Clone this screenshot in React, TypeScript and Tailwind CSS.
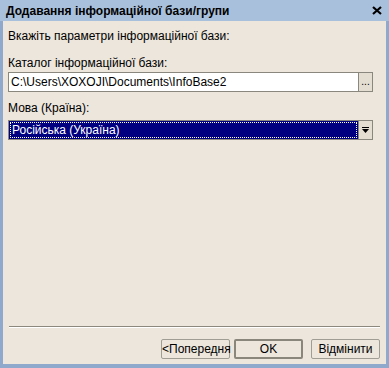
const font = "font-['Tahoma','Liberation_Sans',Arial,sans-serif]"

const CloseGlyph = () => (
    <svg width="10" height="9" viewBox="0 0 10 9">
        <path d="M1 1 L9 8 M9 1 L1 8" stroke="#000" strokeWidth="2.2" />
    </svg>
)

const DropArrow = () => (
    <svg width="9" height="7" viewBox="0 0 9 7">
        <rect x="1" y="0" width="7" height="1" fill="#000" />
        <path d="M1 2 H8 L4.5 6 Z" fill="#000" />
    </svg>
)

const Button = ({ label, primary }: { label: string; primary?: boolean }) => (
    <button
        type="button"
        className={
            primary
                ? "h-[20px] w-[69px] rounded-[2px] border-2 border-[#8a867c] bg-[#ece6dc] text-[12px] leading-none text-black"
                : "h-[20px] w-[69px] rounded-[2px] border border-[#a09d95] bg-[#ece6dc] text-[12px] leading-none text-black"
        }
    >
        {label}
    </button>
)

export default function App() {
    return (
        <div className={`w-[389px] h-[368px] bg-[#8fa9cc] flex flex-col ${font}`}>
            <div className="h-[21px] shrink-0 bg-[#a9c0dd] flex items-center justify-between pl-[6px] pr-[7px]">
                <span className="text-[12px] font-bold text-black leading-none">Додавання інформаційної бази/групи</span>
                <CloseGlyph />
            </div>

            <div className="flex-1 mx-[3px] mb-[4px] bg-[#ece6dc] flex flex-col pl-[5px] pr-[13px] pt-[9px] pb-[5px]">
                <p className="text-[12px] leading-[13px] text-black">Вкажіть параметри інформаційної бази:</p>

                <p className="mt-[14px] text-[12px] leading-[13px] text-black">Каталог інформаційної бази:</p>
                <div className="mt-[2px] h-[20px] flex border border-[#8a877e] bg-white">
                    <div className="flex-1 flex items-center pl-[2px] text-[12px] text-black">C:\Users\XOXOJI\Documents\InfoBase2</div>
                    <div className="w-[14px] border-l border-[#8a877e] bg-[#e3ddd2] flex items-end justify-center pb-[4px] text-[10px] leading-none text-black">...</div>
                </div>

                <p className="mt-[10px] text-[12px] leading-[13px] text-black">Мова (Країна):</p>
                <div className="mt-[5px] h-[20px] flex border border-[#8a877e] bg-[#000080]">
                    <div className="flex-1 m-[1px] border border-dotted border-white flex items-center pl-[1px] text-[12px] text-white">Російська (Україна)</div>
                    <div className="w-[14px] border-l border-[#8a877e] bg-[#e3ddd2] flex items-center justify-center">
                        <DropArrow />
                    </div>
                </div>

                <div className="flex-1" />

                <div className="ml-[1px] mr-[-7px] h-[2px] border-t border-[#8c887e] border-b border-b-white" />

                <div className="mt-[11px] mr-[-7px] flex justify-end">
                    <Button label="<Попередня" />
                    <div className="w-[4px]" />
                    <Button label="OK" primary />
                    <div className="w-[8px]" />
                    <Button label="Відмінити" />
                </div>
            </div>
        </div>
    )
}
